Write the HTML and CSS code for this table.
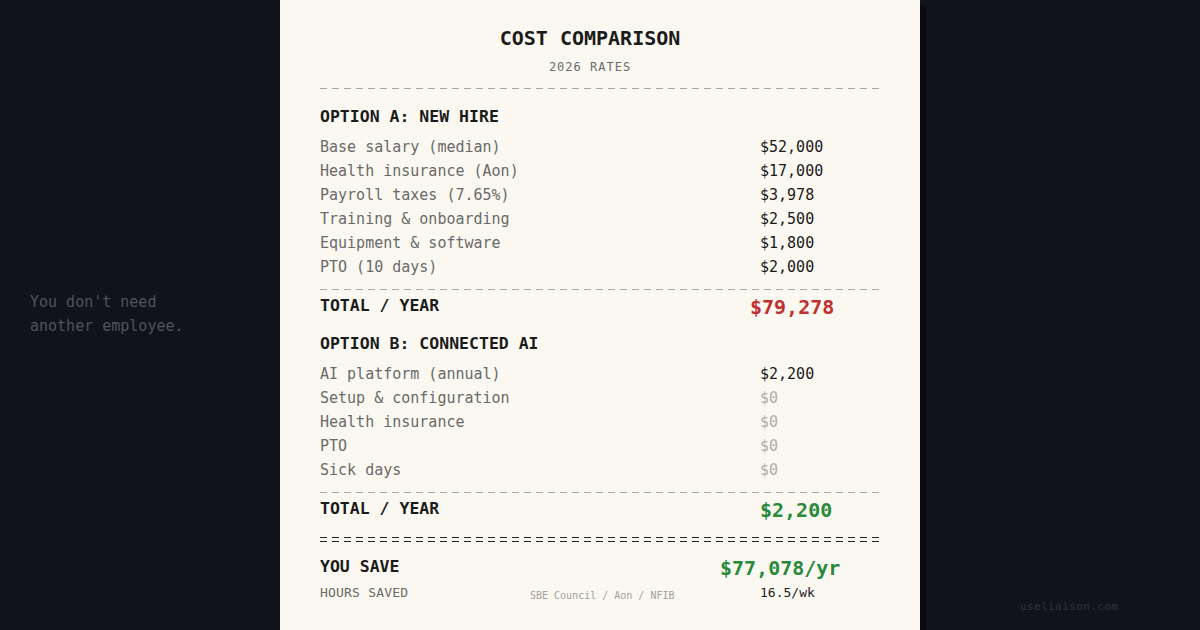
FILE: index.html
```html
<!DOCTYPE html>
<html lang="en">
<head>
<meta charset="utf-8">
<title>Cost Comparison</title>
<link rel="stylesheet" href="styles.css">
</head>
<body>
<div class="page">
  <aside class="side side-left">
    <p class="tagline">You don't need<br>another employee.</p>
  </aside>

  <main class="receipt">
    <header class="receipt-head">
      <h1 class="title">COST COMPARISON</h1>
      <div class="subtitle">2026 RATES</div>
    </header>

    <div class="rule rule-top"></div>

    <section class="option">
      <h2 class="option-title">OPTION A: NEW HIRE</h2>
      <div class="lines">
        <div class="line"><span class="label">Base salary (median)</span><span class="value">$52,000</span></div>
        <div class="line"><span class="label">Health insurance (Aon)</span><span class="value">$17,000</span></div>
        <div class="line"><span class="label">Payroll taxes (7.65%)</span><span class="value">$3,978</span></div>
        <div class="line"><span class="label">Training &amp; onboarding</span><span class="value">$2,500</span></div>
        <div class="line"><span class="label">Equipment &amp; software</span><span class="value">$1,800</span></div>
        <div class="line"><span class="label">PTO (10 days)</span><span class="value">$2,000</span></div>
      </div>
      <div class="rule"></div>
      <div class="total">
        <span class="total-label">TOTAL / YEAR</span>
        <span class="total-value red shift-a">$79,278</span>
      </div>
    </section>

    <section class="option option-b">
      <h2 class="option-title">OPTION B: CONNECTED AI</h2>
      <div class="lines">
        <div class="line"><span class="label">AI platform (annual)</span><span class="value">$2,200</span></div>
        <div class="line"><span class="label">Setup &amp; configuration</span><span class="value zero">$0</span></div>
        <div class="line"><span class="label">Health insurance</span><span class="value zero">$0</span></div>
        <div class="line"><span class="label">PTO</span><span class="value zero">$0</span></div>
        <div class="line"><span class="label">Sick days</span><span class="value zero">$0</span></div>
      </div>
      <div class="rule"></div>
      <div class="total">
        <span class="total-label">TOTAL / YEAR</span>
        <span class="total-value green">$2,200</span>
      </div>
    </section>

    <div class="double-rule"></div>

    <div class="total save">
      <span class="total-label">YOU SAVE</span>
      <span class="total-value green shift-save">$77,078/yr</span>
    </div>
    <div class="hours">
      <span class="hours-label">HOURS SAVED</span>
      <span class="source">SBE Council / Aon / NFIB</span>
      <span class="hours-value">16.5/wk</span>
    </div>
  </main>

  <aside class="side side-right">
    <span class="domain">useliaison.com</span>
  </aside>
</div>
</body>
</html>
```

FILE: styles.css
```css
* { box-sizing: border-box; }

html, body {
  margin: 0;
  padding: 0;
}

body {
  background: #12121b;
  font-family: "DejaVu Sans Mono", "Liberation Mono", monospace;
  color: #1b1b1b;
}

.page {
  display: grid;
  grid-template-columns: 280px 640px 280px;
  width: 1200px;
  height: 630px;
  overflow: hidden;
}

/* side columns */
.side { display: flex; }

.side-left {
  align-items: center;
  padding: 0 0 2px 30px;
}

.tagline {
  margin: 0;
  font-size: 15px;
  line-height: 24px;
  color: #4f5260;
}

.side-right {
  align-items: flex-end;
  padding: 0 0 16px 100px;
}

.domain {
  font-size: 11px;
  line-height: 14px;
  letter-spacing: 0.4px;
  color: #30323f;
}

/* receipt */
.receipt {
  background: #fbf8f1;
  padding: 26px 40px 0;
  box-shadow: 6px 6px 0 #0a0a10;
  position: relative;
}

.receipt-head {
  text-align: center;
  padding-right: 20px;
}

.title {
  margin: 0;
  font-size: 20px;
  line-height: 24px;
  font-weight: bold;
  color: #1b1b1b;
}

.subtitle {
  margin-top: 9px;
  font-size: 12px;
  line-height: 16px;
  letter-spacing: 1px;
  color: #6b6b6b;
}

.rule {
  height: 1px;
  margin-top: 10px;
  background: repeating-linear-gradient(90deg, #aaa7a0 0 7px, transparent 7px 12px);
}

.rule-top {
  margin-top: 13px;
}

.option-title {
  margin: 18px 0 0;
  font-size: 16.5px;
  line-height: 20px;
  font-weight: bold;
  color: #1b1b1b;
}

.option-b .option-title {
  margin-top: 12px;
}

.lines {
  margin-top: 8px;
}

.line {
  display: grid;
  grid-template-columns: 440px 1fr;
  font-size: 15px;
  line-height: 24px;
}

.label { color: #6a6a6a; }
.value { color: #1b1b1b; }
.value.zero { color: #b0aca6; }

.total {
  display: grid;
  grid-template-columns: 440px 1fr;
  align-items: center;
  height: 32px;
}

.total-label {
  font-size: 16.5px;
  line-height: 20px;
  font-weight: bold;
  color: #1b1b1b;
}

.total-value {
  font-size: 20px;
  line-height: 24px;
  font-weight: bold;
  padding-top: 2px;
}

.red { color: #c0302f; }
.green { color: #2a8a3c; }

.shift-a { margin-left: -10px; }
.shift-save { margin-left: -40px; }

.double-rule {
  height: 5px;
  margin-top: 12px;
  background:
    repeating-linear-gradient(90deg, #222 0 7px, transparent 7px 12px) top / 100% 1px no-repeat,
    repeating-linear-gradient(90deg, #222 0 7px, transparent 7px 12px) bottom / 100% 1px no-repeat;
}

.save {
  margin-top: 9px;
}

.hours {
  display: grid;
  grid-template-columns: 210px 230px 1fr;
  align-items: center;
  height: 24px;
  margin-top: -2px;
}

.hours-label {
  font-size: 13px;
  line-height: 18px;
  letter-spacing: 0.2px;
  color: #6a6a6a;
}

.source {
  font-size: 10px;
  line-height: 14px;
  color: #a3a09a;
  padding-top: 6px;
}

.hours-value {
  font-size: 13px;
  line-height: 18px;
  color: #1b1b1b;
}
```
